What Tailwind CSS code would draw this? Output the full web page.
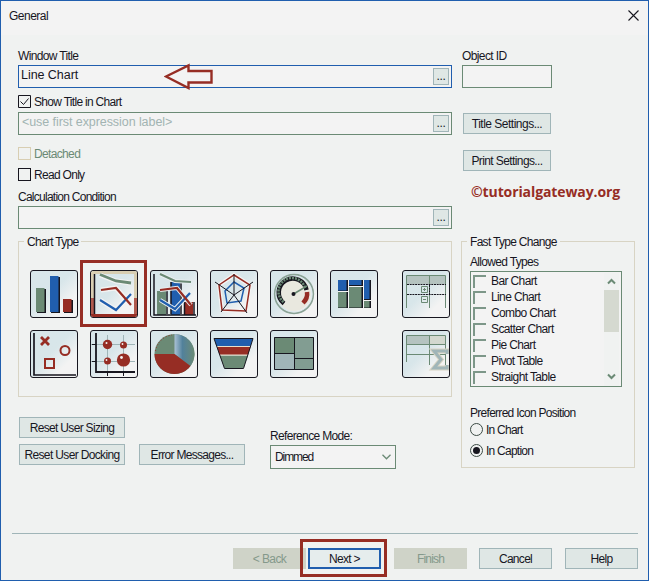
<!DOCTYPE html>
<html lang="en">
<head>
<meta charset="utf-8">
<title>General</title>
<script src="https://cdn.jsdelivr.net/npm/@tailwindcss/browser@4"></script>
</head>
<body class="w-[649px] h-[581px] overflow-hidden bg-[#f0f2f1] font-['Liberation_Sans',Arial,sans-serif] text-[12px] leading-[16px] tracking-[-0.7px] text-[#17161f] whitespace-nowrap">
<div class="w-[649px] h-[581px] border border-[#205eae] flex flex-col">
  <header class="h-[34px] shrink-0 bg-[#f3f3f3] flex justify-between pl-2 pr-[9px]">
    <h1 class="pt-[7px] tracking-[-0.5px]">General</h1>
    <svg class="mt-[9px] w-[11px] h-[11px]" viewBox="0 0 11 11" stroke="#17161f" stroke-width="1.1"><path d="M.5.5l10 10M10.5.5l-10 10"/></svg>
  </header>

  <main class="h-[497px] shrink-0 flex pl-[17px] gap-[9px]">
    <section class="w-[434px] flex flex-col">
      <label class="mt-[13px] h-[17px] tracking-[-0.65px]">Window Title</label>
      <div class="relative h-[23px] border border-[#205eae] bg-[#f3f3f3] flex justify-between pl-[2px] pr-[2px]">
        <span class="pt-px text-[12.5px] tracking-[-0.05px]">Line Chart</span>
        <svg class="absolute left-[145px] -top-[3px] w-[50px] h-[27px]" viewBox="0 0 50 27" fill="none" stroke="#962d24" stroke-width="2.4"><path d="M2 13.5L24.500 2.500V8H47.500V19.500H24.500V25Z"/></svg>
        <button class="mt-[2px] w-4 h-[17px] border border-[#a0b5b8] bg-[#dfe7e5] leading-[15px] tracking-[-0.4px]">...</button>
      </div>
      <label class="mt-[6px] h-[15px] flex items-center gap-[3px] tracking-[-0.7px]"><svg class="w-[13px] h-[13px]" viewBox="0 0 13 13" fill="none" stroke="#17161f"><path d="M.5.5h12v12H.5zM2.500 6.500l3 3 5-6"/></svg>Show Title in Chart</label>
      <div class="mt-[3px] h-[23px] border border-[#6b8a75] bg-[#f3f3f3] flex justify-between pl-[3px] pr-[2px]">
        <span class="text-[#a2b4b2] text-[12.5px] tracking-[-0.07px] pt-px">&lt;use first expression label&gt;</span>
        <button class="mt-[2px] w-4 h-[17px] border border-[#a0b5b8] bg-[#dfe7e5] leading-[15px] tracking-[-0.4px]">...</button>
      </div>
      <label class="mt-[11px] h-[15px] flex items-center gap-[3px] text-[#6b8a75] tracking-[-0.65px]"><i class="w-[13px] h-[13px] border border-[#d8ceb2]"></i>Detached</label>
      <label class="mt-[6px] h-[15px] flex items-center gap-[3px] tracking-[-0.7px]"><i class="w-[13px] h-[13px] border border-[#17161f]"></i>Read Only</label>
      <label class="mt-[7px] h-[17px] tracking-[-0.74px]">Calculation Condition</label>
      <div class="h-[23px] border border-[#6b8a75] bg-[#f3f3f3] flex justify-end pr-[2px]">
        <button class="mt-[2px] w-4 h-[17px] border border-[#a0b5b8] bg-[#dfe7e5] leading-[15px] tracking-[-0.4px]">...</button>
      </div>

      <fieldset class="relative mt-[12px] h-[156px] border border-[#d8d4c4]">
        <span class="absolute left-[5px] -top-[8px] px-[3px] bg-[#f0f2f1] tracking-[-0.7px]">Chart Type</span>
        <div class="pt-[28px] pl-[11px] grid grid-cols-[60px_60px_60px_60px_60px_72px_48px] gap-y-3 [&>svg]:w-12 [&>svg]:h-12 [&>svg]:border [&>svg]:border-[#17161f] [&>svg]:rounded-[3px] [&>svg]:bg-linear-to-br [&>svg]:from-[#d8e6ea] [&>svg]:from-45% [&>svg]:to-[#f3f3f3] [&>svg]:to-75%">
          <!-- bar -->
          <svg viewBox="1 1 46 46"><path fill="#17161f" d="M7 19h9v24H7zM21 7h9v36h-9zM34 30h9v13h-9z"/><path fill="#6b8a75" d="M6 18h8.500v24H6z"/><path fill="#205eae" d="M20 6h8.500v36H20z"/><path fill="#962d24" d="M33 29h8.500v13H33z"/></svg>
          <!-- line -->
          <svg viewBox="1 1 46 46" fill="none"><path stroke="#d8ceb2" stroke-width="3" d="M2 2.500H45.500V28M2.500 2V28"/><path stroke="#b05a4e" stroke-width="3" d="M2.500 28V45.500M45.500 44V28"/><path stroke="#962d24" stroke-width="3" d="M1 45.500H47"/><path stroke="#17161f" stroke-width="1.500" d="M4.500 4V44"/><g stroke="#f3f3f3" stroke-width="5"><path d="M10 5l16 6 15 2M11 20l15-2 15 17M10 30l16 10 15-16"/></g><g stroke-width="2.200"><path stroke="#6b8a75" stroke-width="2.800" d="M10 4.500l16 6.500 15 2"/><path stroke="#205eae" d="M10 30l16 10 15-16"/><path stroke="#962d24" d="M11 20l15-2 15 17"/></g></svg>
          <!-- combo -->
          <svg viewBox="1 1 46 46" fill="none"><path fill="#6b8a75" d="M7 21h9v24H7z"/><path fill="#205eae" d="M21 12h9v33h-9z"/><path fill="#962d24" d="M35 32h8v13h-8z"/><path stroke="#17161f" stroke-width="1.500" d="M4 4v41H46M17 21v23M31 12v32M44 32v13M21 12v32M34.500 32v13"/><g stroke="#e8eef0" stroke-width="4.200"><path d="M10 4l15 7 16 1M10 20l17-2 14 17M10 30l15 9 15-16"/></g><g stroke-width="2.200"><path stroke="#6b8a75" d="M10 4l15 7 16 1"/><path stroke="#205eae" d="M10 30l15 9 15-16"/><path stroke="#962d24" d="M10 20l17-2 14 17"/></g></svg>
          <!-- radar -->
          <svg viewBox="1 1 46 46" fill="none"><path stroke="#f3f3f3" stroke-width="4" d="M24 5l16 10-4 26-24-1L9 15z"/><path stroke="#962d24" stroke-width="1.500" d="M24 5l16 10-4 26-24-1L9 15z"/><path stroke="#205eae" stroke-width="1.500" d="M24 12l10 6-3 13-14 2-2-12z"/><path stroke="#17161f" stroke-width="1" d="M24 4v21l19-13M24 25l13 18M24 25L11 42M24 25L5 12"/></svg>
          <!-- gauge -->
          <svg viewBox="1 1 46 46" fill="none"><circle cx="24" cy="24" r="17" fill="#e9e8df"/><circle cx="24" cy="24" r="19.300" stroke="#8ba396" stroke-width="1.700"/><circle cx="24" cy="24" r="18" stroke="#d8e6ea"/><path stroke="#17161f" stroke-width="4.500" d="M14 33.500A14 14 0 1 1 36.500 20"/><path stroke="#6b8a75" stroke-width="2.600" stroke-dasharray="2 1" d="M13.500 32A13.500 13.500 0 1 1 35 18"/><path stroke="#962d24" stroke-width="4.500" d="M37 22q1 6-4 11"/><path stroke="#6b8a75" stroke-width="1.500" d="M23.500 24L37 16"/><circle cx="23.500" cy="24" r="2" fill="#17161f"/></svg>
          <!-- block -->
          <svg viewBox="1 1 46 46"><path fill="#17161f" d="M8 10h10v11H8zM19 10h14v6H19zM34 10h7v20h-7zM8 22h10v16H8zM19 17h14v21H19zM34 31h7v7h-7z"/><path fill="#205eae" d="M8 10h8.500v10.500H8zM19 10h12.500v5H19zM34 10h5.500v19H34z"/><path fill="#6b8a75" d="M8 22h8.500v15.500H8zM19 17h12.500v20.500H19zM34 31h5.500v6.500H34z"/><path fill="none" stroke="#f3f3f3" d="M18.500 10v28M33.500 10v28M8 21.500h10M19 16.500h14M34 30.500h7"/></svg>
          <!-- pivot -->
          <svg viewBox="1 1 46 46" fill="none"><path fill="#b5c3c0" d="M5 6h39v8H5z"/><path stroke="#6b8a75" d="M4.500 38V5.500h39V38M27.500 5v33M19.500 16.500h6v6h-6zM19.500 26.500h6v6h-6zM21 19.500h3M22.500 18v3M21 29.500h3"/><path stroke="#17161f" d="M5 14.500h39M5 24.500h39M27.500 15v9" stroke-dasharray="2 .7"/></svg>
          <!-- scatter -->
          <svg viewBox="1 1 46 46" fill="none"><path stroke="#17161f" stroke-width="1.700" d="M4 3v42h42"/><g stroke="#962d24" stroke-width="2"><path stroke-width="2.800" d="M11 7l8 8M19 7l-8 8"/><circle cx="35" cy="20.500" r="4.500"/><path d="M15 29h9v9h-9z"/></g></svg>
          <!-- bubble -->
          <svg viewBox="1 1 46 46" fill="none"><path stroke="#a0b5b8" d="M17.500 5v36M33.500 5v36M1 14.500h44M1 31.500h44"/><path stroke="#17161f" stroke-width="1.800" d="M6 3v39h39"/><path stroke="#17161f" d="M17.500 42v4M33.500 42v4M2 14.500h4M2 31.500h4"/><g fill="#962d24"><circle cx="17.500" cy="14.500" r="4.700"/><circle cx="33.500" cy="15" r="3.500"/><circle cx="17.500" cy="31" r="3.500"/><circle cx="33.500" cy="30" r="6.600"/></g><g fill="#f3f3f3"><circle cx="16.500" cy="13" r="1"/><circle cx="32.500" cy="14" r=".9"/><circle cx="16.500" cy="30" r=".9"/><circle cx="31.500" cy="27.500" r="1.400"/></g></svg>
          <!-- pie -->
          <svg viewBox="1 1 46 46"><defs><linearGradient id="slice"><stop offset="0" stop-color="#a9c1d5"/><stop offset=".4" stop-color="#52819b"/><stop offset="1" stop-color="#6b8a75"/></linearGradient></defs><circle cx="24.500" cy="24" r="20" fill="#6b8a75"/><path fill="url(#slice)" d="M24.500 24V4A20 20 0 0 1 40.500 36z"/><path fill="#962d24" d="M24.500 24L40.500 36A20 20 0 0 1 4.500 24z"/><path fill="none" stroke="#962d24" stroke-dasharray="1 2" d="M5.500 21A19 19 0 0 1 22 5"/></svg>
          <!-- funnel -->
          <svg viewBox="1 1 46 46"><path fill="#205eae" d="M4 8h39l-2.500 8.500h-34z"/><path fill="#962d24" d="M7 17h33.500L38 25H9.500z"/><path fill="#6b8a75" d="M9.700 25.500H38L33.500 38h-19z"/><path stroke="#e8dfcc" d="M7 16.500h33M9 25h29"/><path fill="none" stroke="#17161f" d="M4 8.500h39L33.500 38.500h-19z"/></svg>
          <!-- treemap -->
          <svg viewBox="1 1 46 46"><path fill="#6b8a75" d="M4 7h20v16H4z"/><path fill="#a0b5b8" d="M4 23h20v17H4z"/><path fill="#829d92" d="M24 7h20v33H24z"/><path fill="none" stroke="#17161f" d="M4.500 7.500h39v32h-39zM24.500 7v33M4 23.500h20M24 28.500h20"/></svg>
          <span></span>
          <!-- straight table -->
          <svg viewBox="1 1 46 46" fill="none"><path fill="#b5c3c0" d="M5 6h22v8H5z"/><path fill="#d3d8cf" d="M28 6h16v8H28z"/><path stroke="#6b8a75" d="M4.500 32V5.500h39V40M4 14.500h39M4 24.500h39M27.500 5v30"/><path stroke="#d8d4c4" stroke-width="5" d="M45 24v-3H32l7 8.500-7 8.500h13v-3"/><path stroke="#a0b5b8" stroke-width="3" d="M45 24v-3H32l7 8.500-7 8.500h13v-3"/></svg>
        </div>
        <i class="absolute left-[61px] top-[18px] w-[67px] h-[67px] border-3 border-[#962d24]"></i>
      </fieldset>

      <div class="mt-[20px] pl-px flex">
        <div class="w-[106px] flex flex-col gap-[6px]">
          <button class="h-[21px] border border-[#a0b5b8] bg-[#dfe7e5] tracking-[-0.68px]">Reset User Sizing</button>
          <button class="h-[21px] border border-[#a0b5b8] bg-[#dfe7e5] tracking-[-0.65px]">Reset User Docking</button>
        </div>
        <button class="ml-[14px] mt-[27px] w-[106px] h-[21px] border border-[#a0b5b8] bg-[#dfe7e5] tracking-[-0.7px]">Error Messages...</button>
        <div class="ml-[25px] mt-[11px] w-[126px]">
          <label class="block h-[17px] tracking-[-0.65px]">Reference Mode:</label>
          <div class="h-[24px] border border-[#6b8a75] bg-[#f3f3f3] flex items-center justify-between pl-1 pr-1 tracking-[-1.1px]">Dimmed<svg class="w-[9px] h-[6px]" viewBox="0 0 9 6" fill="none" stroke="#6b8a75" stroke-width="1.300"><path d="M.5.8l4 4 4-4"/></svg></div>
        </div>
      </div>
    </section>

    <section class="w-[174px] flex flex-col">
      <div class="pl-px h-[206px] flex flex-col">
        <label class="mt-[13px] h-[17px] tracking-[-0.6px]">Object ID</label>
        <div class="w-[90px] h-[23px] border border-[#6b8a75] bg-[#f3f3f3]"></div>
        <button class="ml-px mt-[25px] w-[88px] h-[21px] border border-[#a0b5b8] bg-[#dfe7e5] tracking-[-0.5px]">Title Settings...</button>
        <button class="ml-px mt-[16px] w-[88px] h-[21px] border border-[#a0b5b8] bg-[#dfe7e5] tracking-[-0.6px]">Print Settings...</button>
        <p class="ml-[9px] mt-[11px] h-5 leading-5 font-['Open_Sans',sans-serif] font-bold text-[14px] tracking-[-0.1px] text-[#962d24]">©tutorialgateway.org</p>
      </div>
      <fieldset class="relative h-[227px] border border-[#d8d4c4] pl-2">
        <span class="absolute left-[5px] -top-[8px] px-[3px] bg-[#f0f2f1] tracking-[-0.7px]">Fast Type Change</span>
        <div class="mt-[12px] h-[17px] tracking-[-0.67px]">Allowed Types</div>
        <div class="w-[152px] h-[116px] border border-[#6b8a75] bg-[#f3f3f3] flex justify-between pt-px pl-[2px] pr-[2px]">
          <ul class="[&>li]:h-4 [&>li]:flex [&>li]:items-center [&>li]:gap-[5px] tracking-[-0.62px] [&_i]:w-[13px] [&_i]:h-[13px] [&_i]:border-t-2 [&_i]:border-l-2 [&_i]:border-[#7d9789]">
            <li><i></i>Bar Chart</li><li><i></i>Line Chart</li><li><i></i>Combo Chart</li><li><i></i>Scatter Chart</li><li><i></i>Pie Chart</li><li><i></i>Pivot Table</li><li><i></i>Straight Table</li>
          </ul>
          <div class="w-[15px] bg-[#f0f2f1] flex flex-col items-center">
            <svg class="mt-[5px] w-[9px] h-[7px]" viewBox="0 0 9 7" fill="none" stroke="#6b8a75" stroke-width="2"><path d="M1 5.500L4.500 2 8 5.500"/></svg>
            <i class="mt-[5px] w-[15px] h-[42px] bg-[#d5d9d0]"></i>
            <svg class="mt-[41px] w-[9px] h-[7px]" viewBox="0 0 9 7" fill="none" stroke="#6b8a75" stroke-width="2"><path d="M1 1.500L4.500 5 8 1.500"/></svg>
          </div>
        </div>
        <div class="mt-[18px] h-4 tracking-[-0.72px]">Preferred Icon Position</div>
        <label class="mt-px h-[15px] flex items-center gap-[3px] tracking-[-0.75px]"><i class="w-[13px] h-[13px] rounded-full border border-[#3c4b45]"></i>In Chart</label>
        <label class="mt-[6px] h-[15px] flex items-center gap-[3px] tracking-[-0.75px]"><i class="w-[13px] h-[13px] rounded-full border border-[#3c4b45] p-[2px]"><b class="block w-[7px] h-[7px] rounded-full bg-[#17161f]"></b></i>In Caption</label>
      </fieldset>
    </section>
  </main>

  <footer class="relative mx-[11px] mr-[10px] mt-px border-t border-[#a0b5b8] pt-[14px] flex">
    <button class="ml-[221px] w-[73px] h-[21px] bg-[#cfd3c8] text-[#84998b] tracking-[-0.6px]">&lt; Back</button>
    <button class="ml-[2px] w-[73px] h-[21px] border-2 border-[#205eae] bg-[#e6eded] tracking-[-0.7px]">Next &gt;</button>
    <button class="ml-[13px] w-[73px] h-[21px] bg-[#cfd3c8] text-[#84998b] tracking-[-0.8px]">Finish</button>
    <button class="ml-[12px] w-[73px] h-[21px] border border-[#a0b5b8] bg-[#dfe7e5] tracking-[-0.7px]">Cancel</button>
    <button class="ml-[13px] w-[73px] h-[21px] border border-[#a0b5b8] bg-[#dfe7e5] tracking-[-0.7px]">Help</button>
    <i class="absolute left-[288px] top-[5px] w-[87px] h-[38px] border-3 border-[#962d24]"></i>
  </footer>
</div>
</body>
</html>
